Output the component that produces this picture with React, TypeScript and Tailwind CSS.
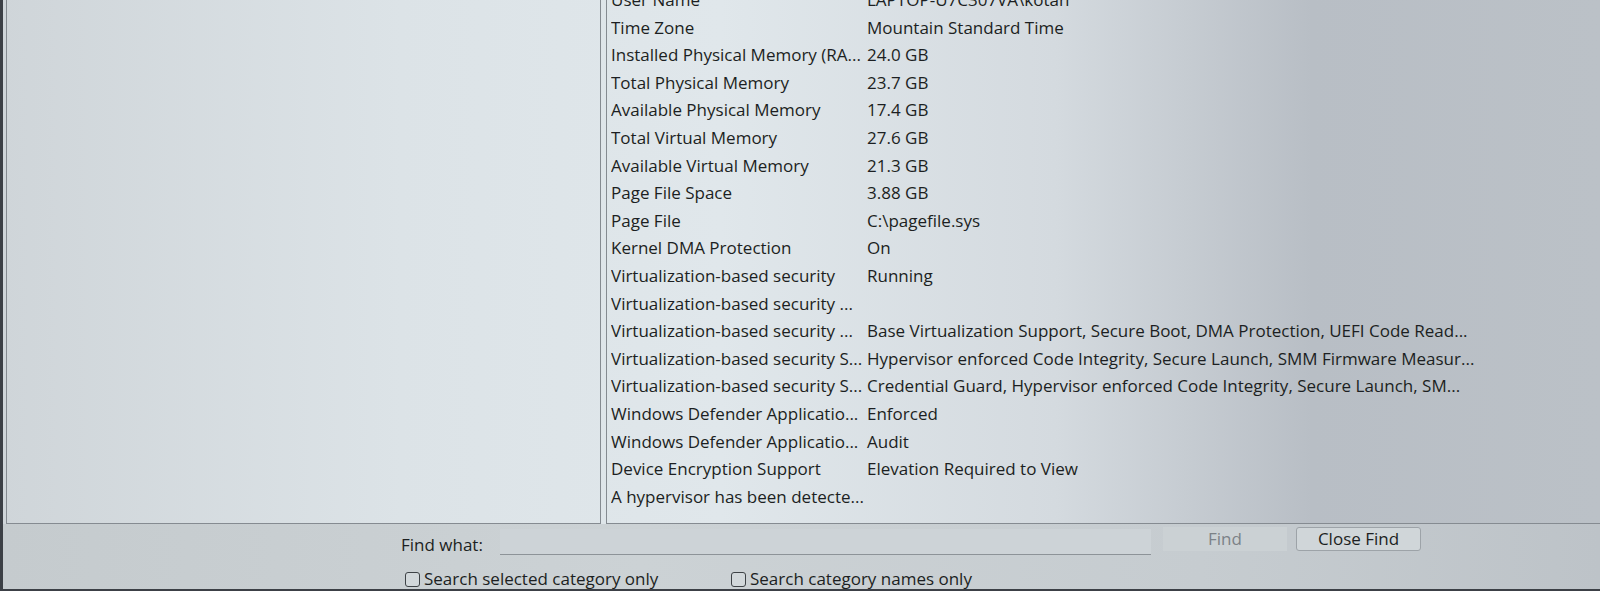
import React from "react";

const rows: [string, string][] = [
  ["User Name", "LAPTOP-U7C307VA\\kotan"],
  ["Time Zone", "Mountain Standard Time"],
  ["Installed Physical Memory (RA...", "24.0 GB"],
  ["Total Physical Memory", "23.7 GB"],
  ["Available Physical Memory", "17.4 GB"],
  ["Total Virtual Memory", "27.6 GB"],
  ["Available Virtual Memory", "21.3 GB"],
  ["Page File Space", "3.88 GB"],
  ["Page File", "C:\\pagefile.sys"],
  ["Kernel DMA Protection", "On"],
  ["Virtualization-based security", "Running"],
  ["Virtualization-based security ...", ""],
  ["Virtualization-based security ...", "Base Virtualization Support, Secure Boot, DMA Protection, UEFI Code Read..."],
  ["Virtualization-based security S...", "Hypervisor enforced Code Integrity, Secure Launch, SMM Firmware Measur..."],
  ["Virtualization-based security S...", "Credential Guard, Hypervisor enforced Code Integrity, Secure Launch, SM..."],
  ["Windows Defender Applicatio...", "Enforced"],
  ["Windows Defender Applicatio...", "Audit"],
  ["Device Encryption Support", "Elevation Required to View"],
  ["A hypervisor has been detecte...", ""],
];

export default function App() {
  return (
    <div
      className="relative w-[1600px] h-[591px] overflow-hidden text-[#1c1f22] bg-[linear-gradient(90deg,#cfd5d9_0%,#dce3e7_25%,#e0e7eb_45%,#d4dadf_66%,#b8bec5_82%,#bbc1c7_100%)]"
      style={{ fontFamily: '"Open Sans", "Noto Sans", sans-serif' }}
    >
      <div className="flex h-[591px] flex-col border-l-[3px] border-b-[2px] border-[#3c4046]">
        <div className="flex h-[524px] shrink-0 gap-[5px] pl-[3px]">
          <div className="w-[595px] shrink-0 border-r border-b border-l border-[#858b91]" />
          <div className="flex-1 overflow-hidden border-l border-b border-[#858b91]">
            <div className="-mt-[14px] flex flex-col pl-[4px] text-[17px]">
              {rows.map(([k, v], i) => (
                <div key={i} className="flex h-[27.6px] shrink-0 items-center whitespace-nowrap">
                  <div className="w-[256px] shrink-0 overflow-hidden">{k}</div>
                  <div>{v}</div>
                </div>
              ))}
            </div>
          </div>
        </div>
        <div className="flex flex-1 flex-col overflow-hidden bg-[linear-gradient(90deg,#c5cbce_0%,#ccd2d5_40%,#c6ccd0_75%,#bdc3c8_100%)] pl-[398px] text-[17px]">
          <div className="flex h-[40px] shrink-0 items-start">
            <span className="mt-[9px] w-[99px] shrink-0 leading-[24px]">Find what:</span>
            <div className="mt-[5px] h-[26px] w-[651px] shrink-0 border-b border-[#8d9398] bg-[#cdd3d7]" />
            <div className="ml-[12px] mt-[3px] flex h-[24px] w-[124px] items-center justify-center bg-[#cbd1d4] text-[#7c8287]">
              Find
            </div>
            <div className="ml-[9px] mt-[3px] flex h-[24px] w-[125px] items-center justify-center rounded-[3px] border border-[#9da3a8] bg-[#d0d6d9]">
              Close Find
            </div>
          </div>
          <div className="flex h-[30px] shrink-0 items-center pl-[4px]">
            <span className="h-[15px] w-[15px] shrink-0 rounded-[3px] border border-[#3e4347] bg-[#d2d8db]" />
            <span className="ml-[4px] w-[307px]">Search selected category only</span>
            <span className="h-[15px] w-[15px] shrink-0 rounded-[3px] border border-[#3e4347] bg-[#d2d8db]" />
            <span className="ml-[4px]">Search category names only</span>
          </div>
        </div>
      </div>
    </div>
  );
}
